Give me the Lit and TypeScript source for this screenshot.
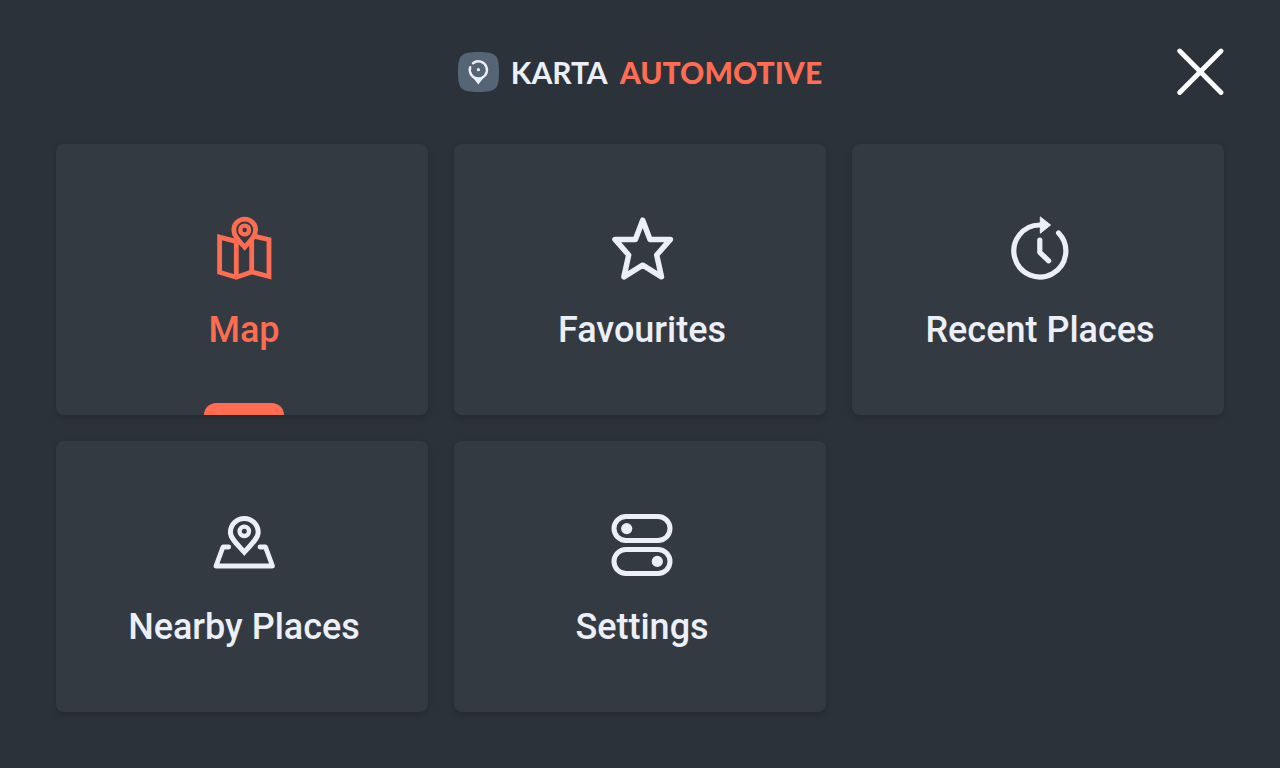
import { LitElement, html, css, svg, SVGTemplateResult } from "lit";
import { customElement, state } from "lit/decorators.js";
import { classMap } from "lit/directives/class-map.js";

interface Tile {
  id: string;
  label: string;
  icon: SVGTemplateResult;
}

const tiles: Tile[] = [
  {
    id: "map",
    label: "Map",
    icon: svg`
      <g stroke-width="4.8">
        <path d="M24 25.4 7.6 21.2V56.2L24.3 61.2 39.7 56 57 60.5V23.7L43 20.4" />
        <path d="M24.3 24V61M39.7 24V56" />
        <path d="M32.7 31.2C28 26 21.8 20.5 21.8 14a10.9 10.9 0 0 1 21.8 0C43.6 20.5 37.4 26 32.7 31.2Z" />
        <circle stroke-width="4.4" cx="32.7" cy="14" r="4.4" />
      </g>`,
  },
  {
    id: "favourites",
    label: "Favourites",
    icon: svg`
      <path stroke-width="5.5" stroke-linejoin="round"
        d="M32.7 4.2 40 23.4H60.4L46.7 39 51.5 60.8 32.7 49.2 13.9 60.8 18.7 39 5 23.4H25.4Z" />`,
  },
  {
    id: "recent",
    label: "Recent Places",
    icon: svg`
      <g stroke-width="5.2" stroke-linecap="round" stroke-linejoin="round">
        <path d="M50.6 17A26 26 0 1 1 32 9" />
        <path d="M31.8 24V36.3L40.7 44.8" />
      </g>
      <path fill="currentColor" stroke="currentColor" stroke-linejoin="round"
        d="M32.3 0.900 42.600 9 32.300 17.200Z" />`,
  },
  {
    id: "nearby",
    label: "Nearby Places",
    icon: svg`
      <path stroke-width="5"
        d="M32.3 39.2C26 32 18.4 25.5 18.4 19.3a13.9 13.9 0 0 1 27.8 0C46.2 25.5 38.6 32 32.3 39.2Z" />
      <circle stroke-width="4.4" cx="32.3" cy="18.3" r="4.7" />
      <path stroke-width="4.8" stroke-linecap="round" stroke-linejoin="round"
        d="M16.700 34H11L4 53H60.500L53.500 34H48" />`,
  },
  {
    id: "settings",
    label: "Settings",
    icon: svg`
      <g stroke-width="5">
        <rect x="4" y="3.5" width="56" height="24" rx="12" />
        <rect x="4" y="36.500" width="56" height="24" rx="12" />
      </g>
      <g fill="currentColor" stroke="none">
        <circle cx="16.700" cy="15.600" r="5.600" />
        <circle cx="47.300" cy="48.400" r="5.600" />
      </g>`,
  },
];

@customElement("app-root")
export class AppRoot extends LitElement {
  static styles = css`
    :host {
      display: block;
      min-height: 100vh;
      box-sizing: border-box;
      background: #2b3239;
      color: #eceff7;
      font-family: Roboto, "Liberation Sans", sans-serif;
    }
    .header {
      display: grid;
      grid-template-columns: 1fr auto 1fr;
      align-items: center;
      padding: 48px 56px;
    }
    .brand {
      grid-column: 2;
      display: flex;
      align-items: center;
      gap: 12px;
    }
    .badge {
      display: block;
      width: 41px;
      height: 40px;
    }
    .wordmark {
      margin: 0;
      display: flex;
      gap: 12px;
      font: 700 30px/40px Lato, sans-serif;
      white-space: nowrap;
    }
    .accent {
      color: #ff6c52;
      font-weight: 900;
    }
    .close {
      justify-self: end;
      width: 48px;
      height: 48px;
      padding: 0;
      border: 0;
      background: none;
      color: #fff;
      cursor: pointer;
    }
    .close svg {
      display: block;
    }
    .grid {
      display: grid;
      grid-template-columns: repeat(3, minmax(0, 1fr));
      gap: 26px;
      padding: 0 56px 56px;
    }
    .tile {
      position: relative;
      display: flex;
      flex-direction: column;
      align-items: center;
      gap: 29px;
      padding: 72px 0 64px 4px;
      border: 0;
      border-radius: 8px;
      background: #333a41;
      box-shadow: 0 3px 6px rgba(0, 0, 0, 0.16);
      color: inherit;
      font: 500 36px/42px Roboto, "Liberation Sans", sans-serif;
      cursor: pointer;
    }
    .tile.active {
      color: #ff6c52;
    }
    .tile.active::after {
      content: "";
      position: absolute;
      bottom: 0;
      left: calc(50% - 38px);
      width: 80px;
      height: 12px;
      border-radius: 12px 12px 0 0;
      background: #ff6c52;
    }
    .icon {
      width: 64px;
      height: 64px;
      fill: none;
      stroke: currentColor;
    }
  `;

  @state() private active = "map";

  render() {
    return html`
      <header class="header">
        <div class="brand">
          <svg class="badge" viewBox="0 0 41 40" aria-hidden="true">
            <path fill="#556575" d="M0 20C0 3 3 0 20.5 0S41 3 41 20 38 40 20.5 40 0 37 0 20Z" />
            <path fill="none" stroke="#eceff7" stroke-width="2.4" stroke-linecap="round"
              d="M15 11.2A8.600 8.600 0 1 1 12.200 15.200" />
            <path fill="#eceff7" d="M12.500 22.500Q20.300 29.500 28.200 22.500L20.300 32.500Z" />
            <circle fill="#eceff7" cx="20.400" cy="17.700" r="1.600" />
          </svg>
          <h1 class="wordmark"><span>KARTA</span><span class="accent">AUTOMOTIVE</span></h1>
        </div>
        <button class="close" type="button" aria-label="Close">
          <svg width="48" height="48" viewBox="0 0 48 48" fill="none" stroke="currentColor"
            stroke-width="4.8" stroke-linecap="round" aria-hidden="true">
            <path d="M3.700 3 45 44.500M45 3 3.700 44.500" />
          </svg>
        </button>
      </header>
      <nav class="grid" aria-label="Main menu">
        ${tiles.map(
          (t) => html`
            <button
              type="button"
              class=${classMap({ tile: true, active: t.id === this.active })}
              @click=${() => (this.active = t.id)}
            >
              <svg class="icon" viewBox="0 0 64 64" aria-hidden="true">${t.icon}</svg>
              <span>${t.label}</span>
            </button>
          `
        )}
      </nav>
    `;
  }
}
